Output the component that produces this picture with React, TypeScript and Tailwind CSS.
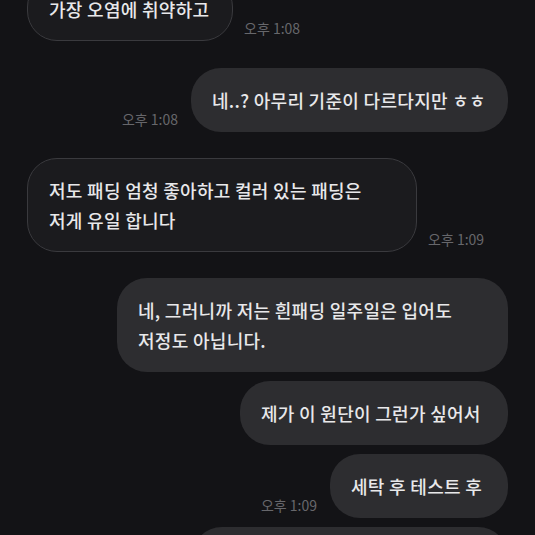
import React from "react";

const font = { fontFamily: '"Noto Sans CJK KR", "Noto Sans", sans-serif' };

function Time({ t }: { t: string }) {
  return (
    <div className="text-[14px] leading-[16px] text-[#67676b] pb-[5px] whitespace-nowrap">{t}</div>
  );
}

function Received({ lines, w, time, extra = "" }: { lines: string[]; w: string; time?: string; extra?: string }) {
  return (
    <div className={`flex items-end gap-[11px] pl-[27px] ${extra}`}>
      <div className={`${w} rounded-[30px] border border-[#3a3a3e] bg-[#1b1b1e] px-[21px] py-[16px] text-[18px] tracking-[0.3px] font-medium leading-[30px] text-[#e8e8ea] whitespace-nowrap`}>
        {lines.map((l, i) => (
          <div key={i}>{l}</div>
        ))}
      </div>
      {time && <Time t={time} />}
    </div>
  );
}

function Sent({ lines, w, time, extra = "" }: { lines: string[]; w: string; time?: string; extra?: string }) {
  return (
    <div className={`flex items-end justify-end gap-[13px] pr-[27px] ${extra}`}>
      {time && <Time t={time} />}
      <div className={`${w} rounded-[30px] bg-[#2d2d30] px-[21px] py-[17px] text-[18px] tracking-[0.3px] font-medium leading-[30px] text-[#e8e8ea] whitespace-nowrap`}>
        {lines.map((l, i) => (
          <div key={i}>{l}</div>
        ))}
      </div>
    </div>
  );
}

export default function App() {
  return (
    <div className="w-[535px] h-[535px] overflow-hidden bg-[#131316]" style={font}>
      <div className="flex flex-col mt-[-23px]">
        <Received lines={["가장 오염에 취약하고"]} w="w-[206px]" time="오후 1:08" />
        <Sent lines={["네..? 아무리 기준이 다르다지만 ㅎㅎ"]} w="w-[317px]" time="오후 1:08" extra="mt-[27px]" />
        <Received
          lines={["저도 패딩 엄청 좋아하고 컬러 있는 패딩은", "저게 유일 합니다"]}
          w="w-[390px]"
          time="오후 1:09"
          extra="mt-[26px]"
        />
        <Sent
          lines={["네, 그러니까 저는 흰패딩 일주일은 입어도", "저정도 아닙니다."]}
          w="w-[391px]"
          extra="mt-[26px]"
        />
        <Sent lines={["제가 이 원단이 그런가 싶어서"]} w="w-[268px]" extra="mt-[9px]" />
        <Sent lines={["세탁 후 테스트 후"]} w="w-[178px]" time="오후 1:09" extra="mt-[9px]" />
        <div className="flex justify-end pr-[27px] mt-[9px]">
          <div className="w-[316px] h-[64px] rounded-[30px] bg-[#2d2d30]" />
        </div>
      </div>
    </div>
  );
}
